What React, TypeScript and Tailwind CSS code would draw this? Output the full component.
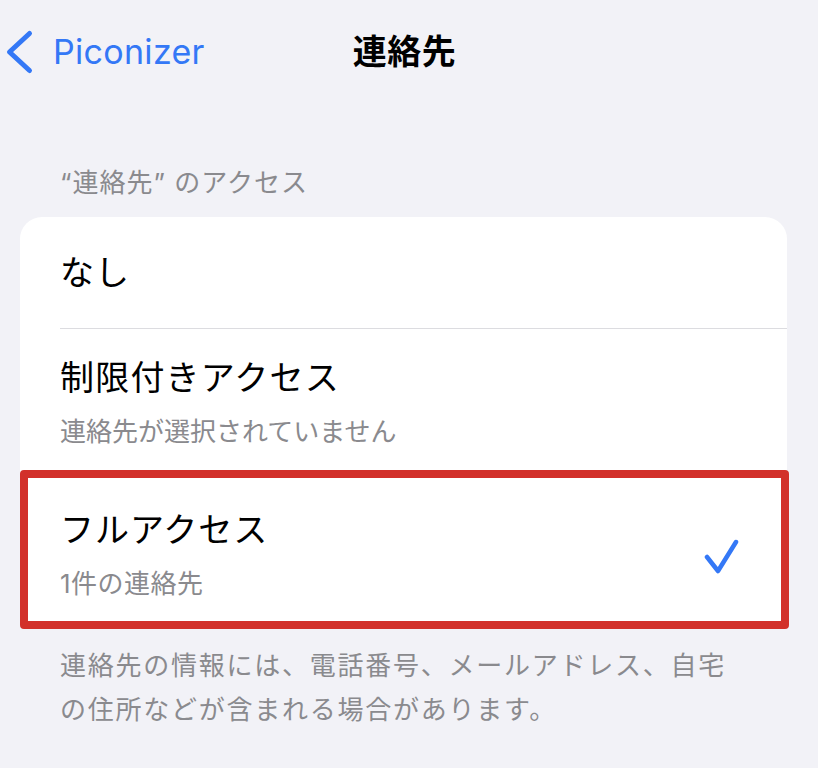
import React from "react";

export default function App() {
  return (
    <div className="relative w-[818px] h-[768px] overflow-hidden bg-[#f2f2f7] font-[Inter,'Noto_Sans_CJK_JP',sans-serif] text-black">
      {/* Navigation bar */}
      <div className="grid grid-cols-[1fr_auto_1fr] items-center h-[104px]">
        <div className="flex items-center">
          <svg width="34" height="48" viewBox="0 0 34 48" className="shrink-0">
            <path
              d="M29.5 5.5 L9.5 24 L29.5 42.5"
              fill="none"
              stroke="#3478f6"
              strokeWidth="5"
              strokeLinecap="round"
              strokeLinejoin="round"
            />
          </svg>
          <span className="ml-[19px] text-[34px] leading-[40px] text-[#3478f6] tracking-[0.3px]">Piconizer</span>
        </div>
        <div className="pr-[9px] text-[34px] leading-[40px] font-semibold tracking-[0.5px]">連絡先</div>
        <div />
      </div>

      {/* Section header */}
      <div className="pl-[60px] pt-[63px] text-[26px] leading-[32px] tracking-[1px] text-[#8a8a8e]">
        “連絡先” のアクセス
      </div>

      {/* Card */}
      <div className="mt-[18px] ml-[20px] w-[767px] rounded-[22px] bg-white">
        <div className="flex items-center h-[111px] pl-[40px] text-[34px] leading-[40px] tracking-[1px]">なし</div>
        <div className="ml-[40px] h-px bg-[#dcdce0]" />
        <div className="flex flex-col pl-[40px] pt-[29px] pb-[26px]">
          <div className="text-[34px] leading-[40px] tracking-[1.2px]">制限付きアクセス</div>
          <div className="mt-[18px] text-[26px] leading-[32px] text-[#8a8a8e]">連絡先が選択されていません</div>
        </div>
        <div className="ml-[40px] h-px bg-[#dcdce0]" />
        <div className="flex items-start justify-between pl-[40px] pr-[48px] pt-[35px] pb-[27px]">
          <div className="flex flex-col">
            <div className="text-[34px] leading-[40px] tracking-[1px]">フルアクセス</div>
            <div className="mt-[18px] text-[26px] leading-[32px] tracking-[0.5px] text-[#8a8a8e]">1件の連絡先</div>
          </div>
          <svg width="36" height="36" viewBox="0 0 36 36" className="mt-[28px] shrink-0">
            <path
              d="M4 19 L15 33 L33 4"
              fill="none"
              stroke="#3478f6"
              strokeWidth="4.5"
              strokeLinecap="round"
              strokeLinejoin="round"
            />
          </svg>
        </div>
      </div>

      {/* Footer */}
      <div className="pl-[60px] mt-[17px] text-[26px] leading-[44px] tracking-[1.75px] text-[#8a8a8e]">
        連絡先の情報には、電話番号、メールアドレス、自宅
        <br />
        の住所などが含まれる場合があります。
      </div>

      {/* Red highlight annotation */}
      <div className="absolute left-[20px] top-[470px] w-[769px] h-[159px] rounded-[4px] border-[8px] border-[#d2302a] pointer-events-none" />
    </div>
  );
}
